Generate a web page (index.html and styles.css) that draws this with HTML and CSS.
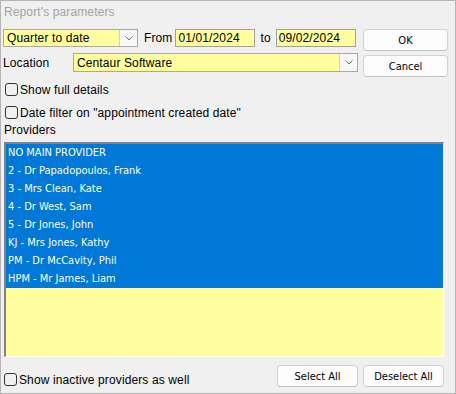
FILE: index.html
```html
<!doctype html>
<html>
<head>
<meta charset="utf-8">
<title>Report's parameters</title>
<link rel="stylesheet" href="styles.css">
</head>
<body>
<div class="dialog">
	<div class="title">Report's parameters</div>
	<div class="top">
		<div class="fields">
			<div class="row row1">
				<div class="combo period">
					<span class="value">Quarter to date</span>
					<span class="arrow"><svg width="8" height="5" viewBox="0 0 8 5"><polyline points="0.5,0.5 4,4 7.5,0.5" fill="none" stroke="#707070" stroke-width="1"/></svg></span>
				</div>
				<span class="lbl from">From</span>
				<div class="edit date">01/01/2024</div>
				<span class="lbl to">to</span>
				<div class="edit date date2">09/02/2024</div>
			</div>
			<div class="row row2">
				<span class="lbl loc">Location</span>
				<div class="combo location">
					<span class="value">Centaur Software</span>
					<span class="arrow"><svg width="8" height="5" viewBox="0 0 8 5"><polyline points="0.5,0.5 4,4 7.5,0.5" fill="none" stroke="#707070" stroke-width="1"/></svg></span>
				</div>
			</div>
		</div>
		<div class="buttons">
			<button class="btn">OK</button>
			<button class="btn">Cancel</button>
		</div>
	</div>
	<label class="check c1"><span class="box"></span>Show full details</label>
	<label class="check c2"><span class="box"></span>Date filter on "appointment created date"</label>
	<div class="providers">Providers</div>
	<ul class="list">
		<li class="sel">NO MAIN PROVIDER</li>
		<li class="sel">2 - Dr Papadopoulos, Frank</li>
		<li class="sel">3 - Mrs Clean, Kate</li>
		<li class="sel">4 - Dr West, Sam</li>
		<li class="sel">5 - Dr Jones, John</li>
		<li class="sel">KJ - Mrs Jones, Kathy</li>
		<li class="sel">PM - Dr McCavity, Phil</li>
		<li class="sel">HPM - Mr James, Liam</li>
	</ul>
	<div class="bottom">
		<label class="check c3"><span class="box"></span>Show inactive providers as well</label>
		<button class="btn small sel-all">Select All</button>
		<button class="btn small">Deselect All</button>
	</div>
</div>
</body>
</html>
```
FILE: styles.css
```css
*{margin:0;padding:0;list-style:none;}
body{ font-family:"Liberation Sans", Arial, sans-serif; font-size:12px; color:#000; background:#f0f0f0;}
.dialog{ width:456px; height:394px; box-sizing:border-box; border:1px solid #b4b4b4; background:#f0f0f0; padding:0 8px 0 2px; letter-spacing:0.12px;}
.title{ color:#a3a3a3; line-height:14px; height:14px; padding:4px 0 0 1px;}

.top{ display:flex; margin-top:10px;}
.fields{ width:355px;}
.row{ display:flex; align-items:center;}
.row1{ height:18px;}
.row2{ height:19px; margin-top:6px;}
.lbl{ line-height:14px;}
.from{ margin:0 3px 0 6px;}
.to{ margin:0 5px 0 5px;}
.loc{ width:70px;}

.combo{ display:flex; box-sizing:border-box; height:100%; border:1px solid #a8a8a8; background:#ffffa0;}
.combo .value{ flex:1; padding-left:3px; display:flex; align-items:center;}
.combo .arrow{ width:17px; border-left:1px solid #cfcfcf; background:#f7f7f7; display:flex; align-items:center; justify-content:center;}
.period{ width:135px;}
.location{ width:285px;}

.edit{ box-sizing:border-box; height:100%; width:80px; border:1px solid #a0a0a0; background:#ffffa0; padding-left:2px; display:flex; align-items:center;}

.buttons{ display:flex; flex-direction:column; gap:4px; margin-left:5px;}
.btn{ box-sizing:border-box; width:85px; height:22px; background:#fdfdfd; border:1px solid #d0d0d0; border-bottom-color:#c2c2c2; border-radius:4px;
 font-family:"DejaVu Sans", Tahoma, sans-serif; font-stretch:condensed; font-size:11px; color:#000; letter-spacing:0;}
.btn.small{ width:81px;}

.check{ display:flex; align-items:center; height:13px; padding-left:2px;}
.check .box{ box-sizing:border-box; width:13px; height:13px; border:1px solid #333; border-radius:3px; margin-right:2px;}
.c1{ margin-top:6px;}
.c2{ margin-top:10px;}

.providers{ line-height:14px; height:14px; margin-top:4px; padding-left:1px;}

.list{ box-sizing:border-box; width:440px; height:215px; margin:5px 0 0 1px; background:#ffffa0;
 border-top:2px solid #828282; border-left:2px solid #828282; border-right:1px solid #fff; border-bottom:1px solid #fff;
 font-family:"DejaVu Sans", Tahoma, sans-serif; font-stretch:condensed; font-size:11px; letter-spacing:0;}
.list li{ height:18px; line-height:18px; padding-left:2px;}
.list li.sel{ background:#0078d7; color:#fff;}

.bottom{ display:flex; align-items:flex-start; width:440px; margin:8px 0 0 1px; gap:5px;}
.c3{ margin-top:8px; padding-left:0; margin-left:0;}
.sel-all{ margin-left:auto;}
```
